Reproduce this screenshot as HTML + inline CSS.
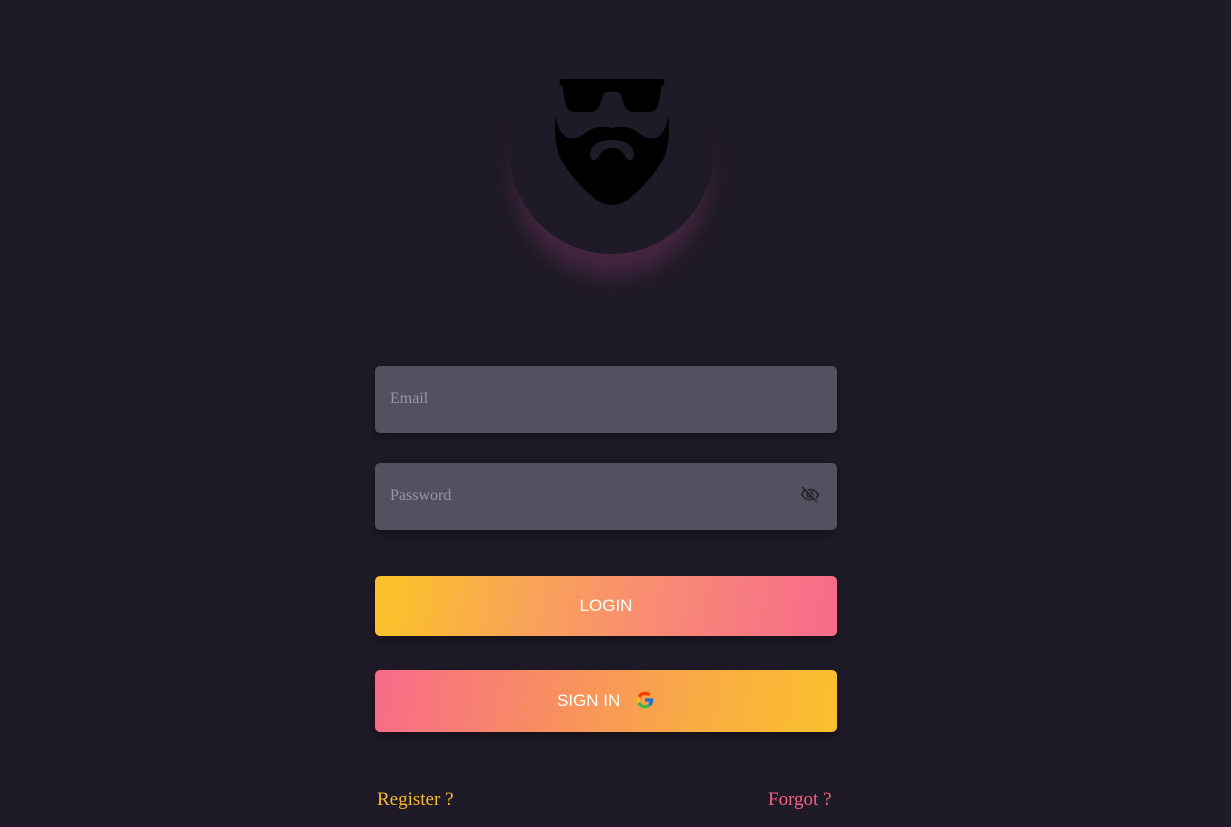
<!DOCTYPE html>
<html><head><meta charset="utf-8"><style>
body{margin:0;width:1231px;height:827px;background:#1e1a27;font-family:"Liberation Serif",serif;overflow:hidden;position:relative}
.av{position:absolute;left:509px;top:44px;width:205px;height:210px;border-radius:50%;background:#1e1a27;box-shadow:0 28px 22px -6px rgba(110,50,90,.5)}
.in{position:absolute;left:375px;width:462px;height:67px;background:#54505f;border-radius:5px;box-shadow:0 4px 10px rgba(0,0,0,.35)}
.in span{position:absolute;left:15px;top:24px;font-size:16px;color:#9995a3}
.btn{position:absolute;left:375px;width:462px;border-radius:5px;color:#fff;font-family:"Liberation Sans",sans-serif;font-size:17px;text-align:center;box-shadow:0 4px 10px rgba(0,0,0,.35)}
</style></head><body>
<div class="av"></div>
<svg style="position:absolute;left:550px;top:78px" width="124" height="130" viewBox="0 0 124 130">
<path d="M10 3 Q9 1 14 1 H110 Q115 1 114 3 Q116 6 112 8 L108 28 Q106 34 98 34 H84 Q76 34 74 26 L70 15 Q62 12 54 15 L50 26 Q48 34 40 34 H26 Q18 34 16 28 L12 8 Q8 6 10 3Z" fill="#000"/>
<path d="M6 38 Q3 62 10 80 Q24 104 44 120 Q62 134 80 120 Q100 104 114 80 Q121 62 118 38 Q116 56 106 60 Q98 62 90 56 Q78 46 62 50 Q46 46 34 56 Q26 62 18 60 Q8 56 6 38Z M40 78 Q40 62 62 62 Q84 62 84 78 Q82 86 76 80 Q72 70 62 70 Q52 70 48 80 Q42 86 40 78Z" fill="#000" fill-rule="evenodd"/>
</svg>
<div class="in" style="top:366px"><span>Email</span></div>
<div class="in" style="top:463px"><span>Password</span>
<svg style="position:absolute;left:425px;top:22px" width="20" height="20" viewBox="0 0 24 24"><path fill="#27232f" d="M12 6.5c3.8 0 7.2 2.1 8.8 5.5-.6 1.2-1.4 2.3-2.4 3.2l1.4 1.4c1.4-1.2 2.5-2.8 3.2-4.6C21.3 7.6 17 4.5 12 4.5c-1.3 0-2.5.2-3.6.6l1.6 1.6c.7-.1 1.3-.2 2-.2zm-1.1 1.1l2.1 2.1c.6.3 1 .7 1.3 1.3l2.1 2.1c.1-.3.1-.7.1-1.1 0-2.5-2-4.5-4.5-4.5-.4 0-.7.1-1.1.1zM2 3.3l2.7 2.7C3 7.3 1.8 9 1 11c1.7 4.4 6 7.5 11 7.5 1.5 0 3-.3 4.4-.8l3.4 3.4 1.4-1.4L3.4 1.9 2 3.3zm7.5 7.5l2.6 2.6h-.1c-1.4 0-2.5-1.1-2.5-2.5zm-3.4-3.4l1.8 1.8c-.2.6-.4 1.2-.4 1.8 0 2.5 2 4.5 4.5 4.5.6 0 1.2-.1 1.8-.4l1 1c-.9.2-1.8.4-2.8.4-3.8 0-7.2-2.1-8.8-5.5.7-1.4 1.7-2.600 2.9-3.6z"/></svg></div>
<div class="btn" style="top:576px;height:60px;line-height:60px;background:linear-gradient(100deg,#fbc02d 5%,#f9a25a 35%,#f98777 65%,#f66b8b)">LOGIN</div>
<div class="btn" style="top:670px;height:62px;line-height:62px;background:linear-gradient(100deg,#f76b8a,#f9905f 40%,#f9b03f 75%,#fbc02d)">SIGN IN <svg style="vertical-align:-4px;margin-left:10px" width="20" height="20" viewBox="0 0 48 48"><path fill="#FFC107" d="M43.6 20H24v8h11.3C33.7 32.7 29.2 36 24 36c-6.6 0-12-5.4-12-12s5.4-12 12-12c3.1 0 5.8 1.2 7.9 3.1l5.7-5.7C34 6.1 29.3 4 24 4 13 4 4 13 4 24s9 20 20 20 20-9 20-20c0-1.3-.1-2.7-.4-4z"/><path fill="#FF3D00" d="M6.3 14.7l6.6 4.8C14.7 15.1 19 12 24 12c3.1 0 5.8 1.2 7.9 3.1l5.7-5.7C34 6.1 29.3 4 24 4 16.3 4 9.7 8.3 6.3 14.7z"/><path fill="#4CAF50" d="M24 44c5.2 0 9.9-2 13.4-5.2l-6.2-5.2C29.2 35.1 26.7 36 24 36c-5.2 0-9.6-3.3-11.3-7.9l-6.5 5C9.5 39.6 16.2 44 24 44z"/><path fill="#1976D2" d="M43.6 20H24v8h11.3c-.8 2.2-2.2 4.2-4.1 5.6l6.2 5.2C37 39.2 44 34 44 24c0-1.3-.1-2.7-.4-4z"/></svg></div>
<div style="position:absolute;left:377px;top:789px;font-size:19px;color:#f9b82e">Register ?</div>
<div style="position:absolute;left:768px;top:789px;font-size:19px;color:#f6617f">Forgot ?</div>
</body></html>
